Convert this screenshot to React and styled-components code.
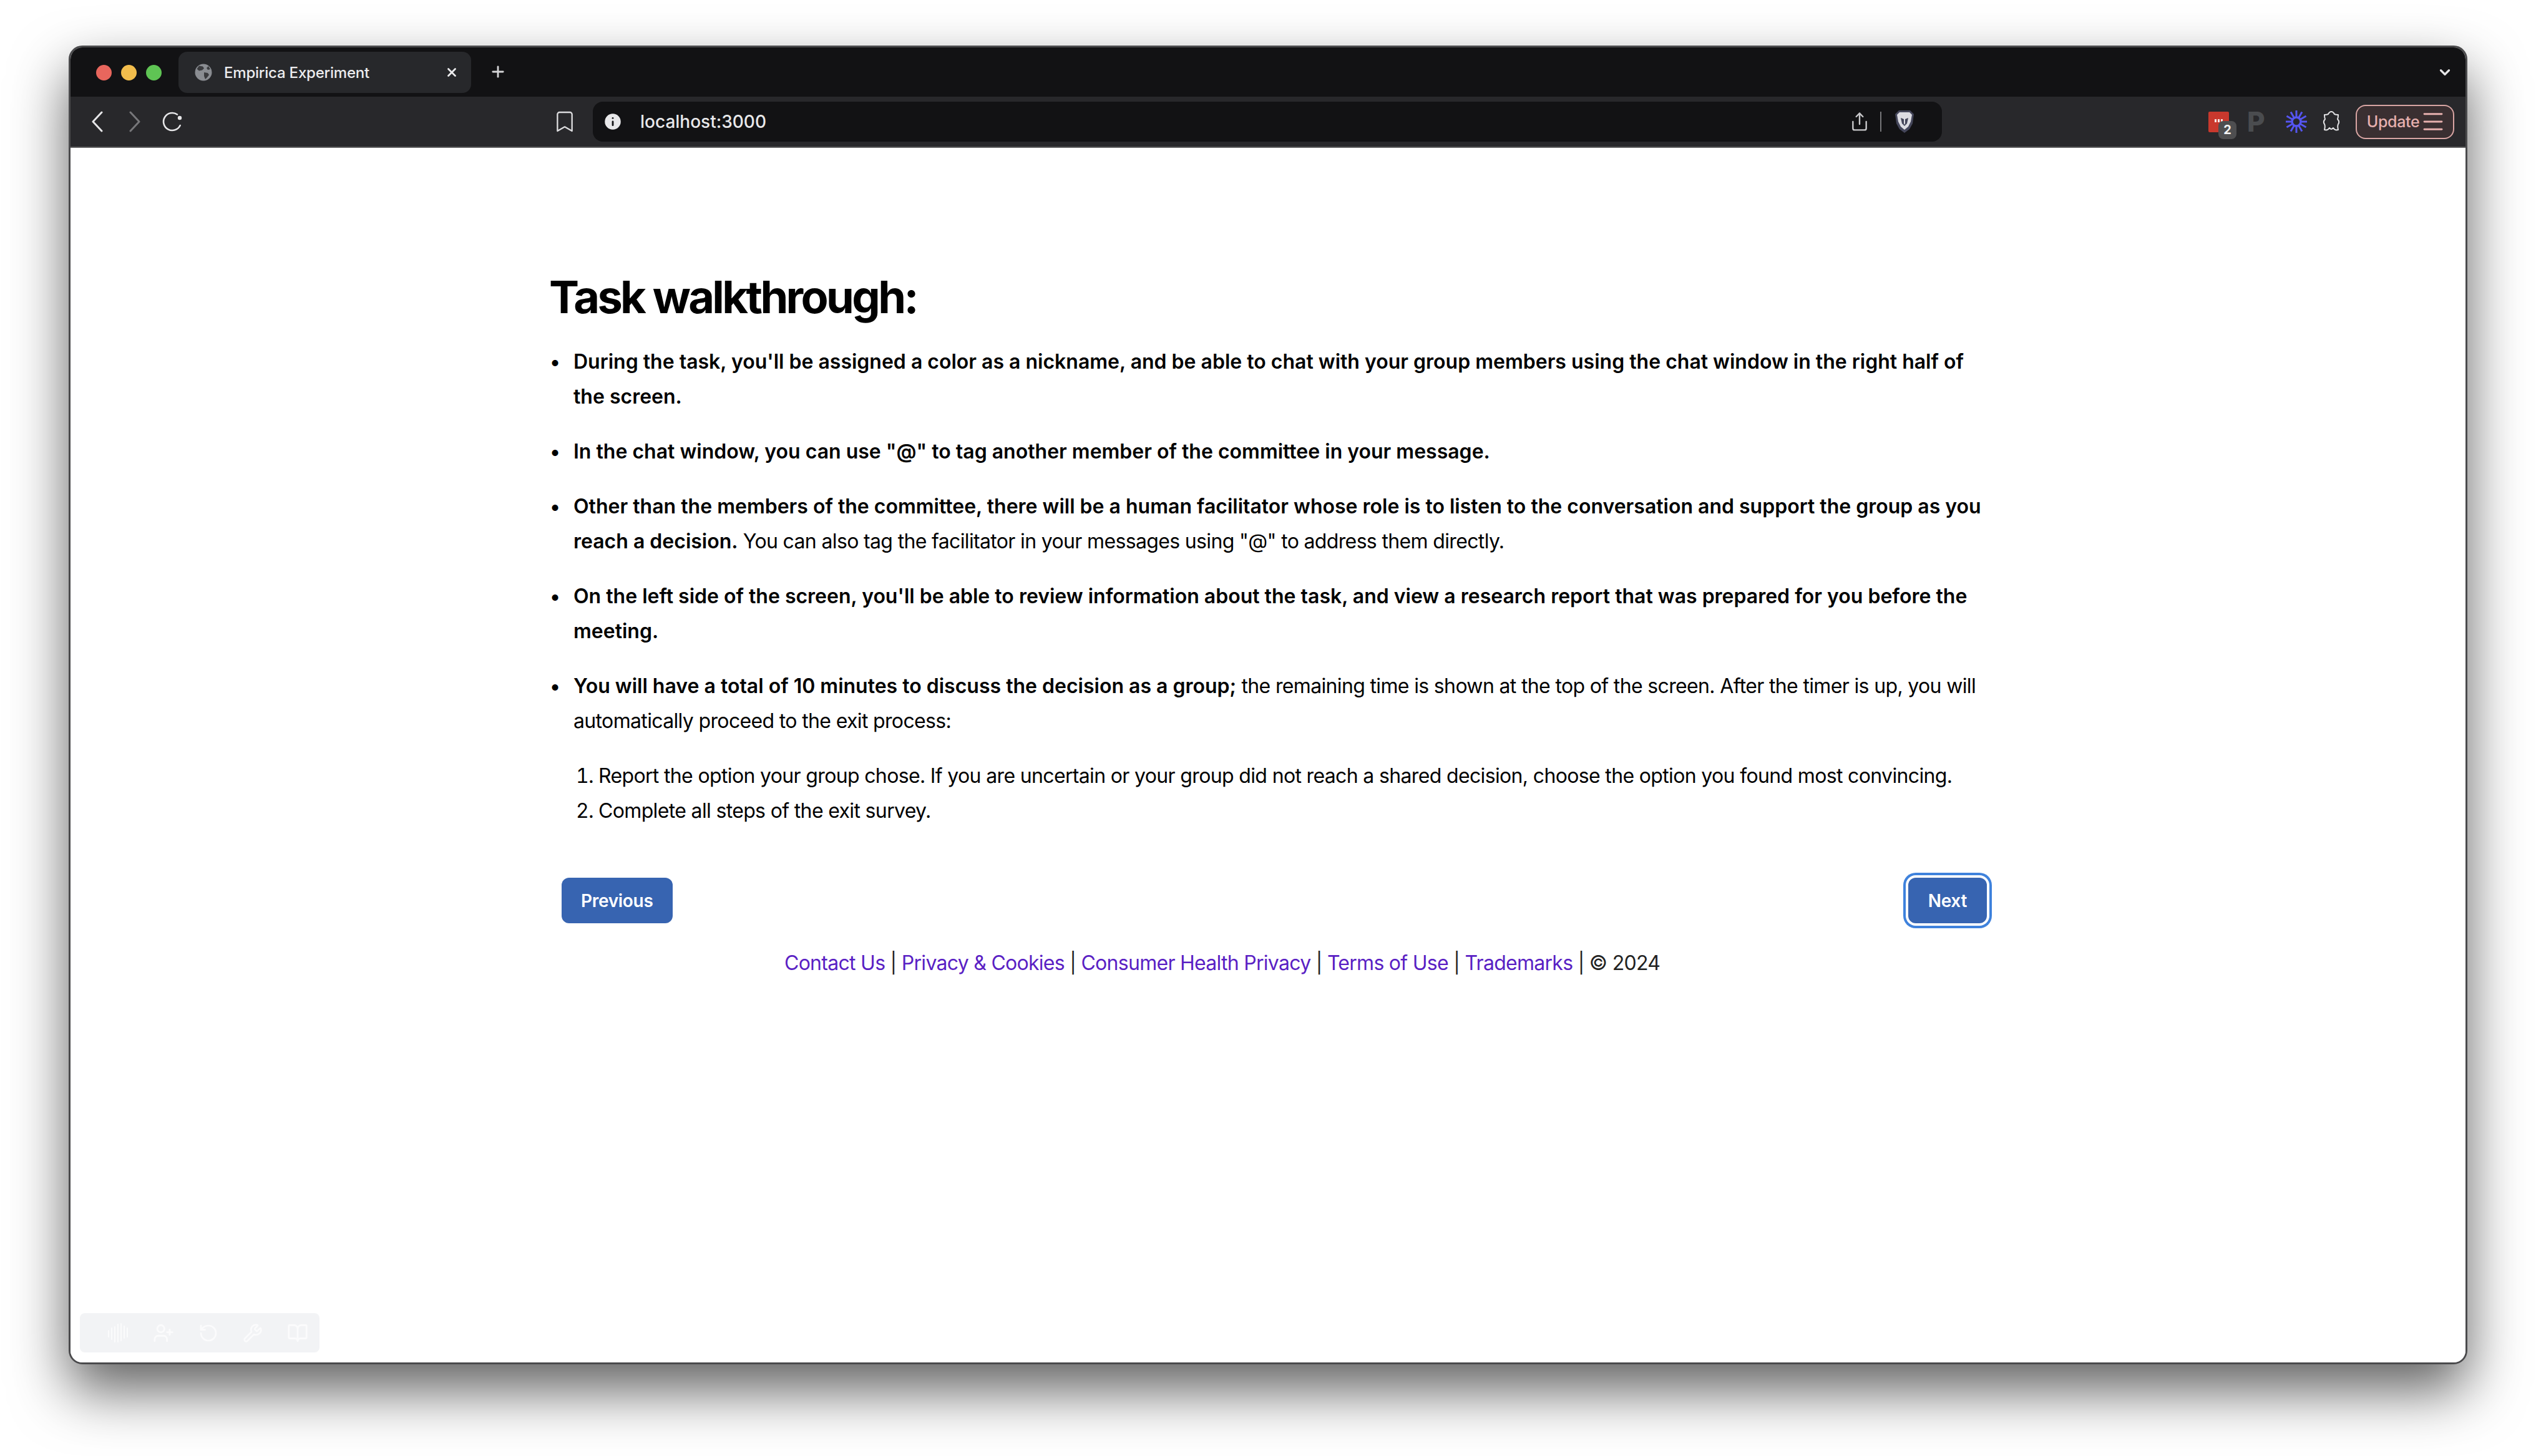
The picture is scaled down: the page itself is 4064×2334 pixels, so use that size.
import styled, { createGlobalStyle } from "styled-components";
import { BookOpen, Bookmark, ChevronDown, Info, Menu, Plus, RotateCcw, Share, UserPlus, Wrench, X } from "lucide-react";

const GlobalStyle = createGlobalStyle`
  html, body {
    margin: 0;
    background: #fff;
    font-family: Inter, "Liberation Sans", sans-serif;
  }
`;

const Page = styled.div`
  box-sizing: border-box;
  width: 4064px;
  height: 2334px;
  padding: 73px 110px 147px;
  overflow: hidden;
`;

const Window = styled.div`
  box-sizing: border-box;
  height: 100%;
  display: flex;
  flex-direction: column;
  border: 3px solid #4a4a4c;
  border-radius: 22px;
  overflow: hidden;
  background: #fff;
  box-shadow: 0 42px 90px rgba(0, 0, 0, 0.62);
`;

const TabStrip = styled.div`
  flex: 0 0 79px;
  box-sizing: border-box;
  display: flex;
  align-items: flex-start;
  padding: 7px 20px 0 41px;
  background: #121214;
  color: #e4e4e6;
`;

const Dots = styled.div`
  display: flex;
  gap: 15px;
  margin: 21px 27px 0 0;
`;

const Dot = styled.span`
  width: 25px;
  height: 25px;
  border-radius: 50%;
  background: ${(p) => p.$color};
`;

const Tab = styled.div`
  box-sizing: border-box;
  width: 469px;
  height: 66px;
  display: flex;
  align-items: center;
  padding: 0 20px 0 26px;
  border-radius: 14px;
  background: #27282b;
  font-size: 24px;
  font-weight: 500;
  letter-spacing: -0.2px;
  color: #ececee;
`;

const TabTitle = styled.span`
  flex: 1;
  margin-left: 19px;
`;

const NewTab = styled.div`
  display: flex;
  margin: 18px 0 0 29px;
  color: #d6d6d8;
`;

const TabMenu = styled.div`
  display: flex;
  margin: 20px 0 0 auto;
  color: #e4e4e6;
`;

const Toolbar = styled.div`
  flex: 0 0 82px;
  box-sizing: border-box;
  display: flex;
  align-items: center;
  padding-left: 13px;
  background: #28282b;
  border-bottom: 2px solid #5a5a5c;
  color: #e2e2e4;
`;

const NavButton = styled.span`
  display: flex;
  justify-content: center;
  width: 60px;
  color: ${(p) => (p.$dim ? "#77777a" : "#e6e6e8")};
`;

const BookmarkSlot = styled.span`
  display: flex;
  margin: 0 25px 0 579px;
  color: #dcdcde;
`;

const AddressBar = styled.div`
  box-sizing: border-box;
  width: 2162px;
  height: 64px;
  display: flex;
  align-items: center;
  padding: 0 44px 0 15px;
  border-radius: 16px;
  background: #121214;
  font-size: 28px;
  font-weight: 500;
  color: #e8e8ea;
`;

const Url = styled.span`
  flex: 1;
  margin-left: 27px;
`;

const Divider = styled.span`
  width: 2px;
  height: 32px;
  margin: 0 21px 0 17px;
  background: #77777a;
`;

const Extensions = styled.div`
  display: flex;
  align-items: center;
  margin-left: 427px;
`;

const ExtensionSlot = styled.span`
  position: relative;
  display: flex;
  margin-right: ${(p) => p.$gap}px;
`;

const RedExtension = styled.span`
  display: flex;
  align-items: center;
  justify-content: center;
  gap: 2px;
  width: 33px;
  height: 33px;
  padding-bottom: 4px;
  box-sizing: border-box;
  background: #c9382d;
  border-radius: 2px;
`;

const RedDot = styled.span`
  width: 3px;
  height: 5px;
  background: #f6e7e5;
`;

const CountBadge = styled.span`
  position: absolute;
  left: 16px;
  top: 15px;
  width: 29px;
  height: 29px;
  display: flex;
  align-items: center;
  justify-content: center;
  border-radius: 8px;
  background: #4e4e50;
  font-size: 20px;
  font-weight: 700;
  color: #f2f2f2;
`;

const PinLetter = styled.span`
  font-size: 44px;
  line-height: 36px;
  font-weight: 800;
  color: #4a4c4f;
`;

const UpdatePill = styled.div`
  box-sizing: border-box;
  width: 158px;
  height: 55px;
  display: flex;
  align-items: center;
  gap: 1px;
  padding-left: 16px;
  border: 2px solid #d8a5a3;
  border-radius: 16px;
  background: #3a2f31;
  font-size: 25px;
  font-weight: 500;
  letter-spacing: -0.3px;
  color: #e6b0ae;
`;

const Viewport = styled.main`
  flex: 1;
  display: flex;
  flex-direction: column;
  min-height: 0;
  background: #fff;
  color: #000;
`;

const Content = styled.section`
  box-sizing: border-box;
  width: 2310px;
  margin: 199px 0 0 767px;
`;

const Title = styled.h1`
  margin: 0 0 36px;
  font-size: 72px;
  line-height: 80px;
  font-weight: 700;
  letter-spacing: -3.6px;
`;

const Bullets = styled.ul`
  display: flex;
  flex-direction: column;
  gap: 32px;
  margin: 0;
  padding: 0 0 0 39px;
  font-size: 32px;
  line-height: 56px;
  letter-spacing: -0.65px;

  li::marker {
    content: "•  \u2009";
  }
`;

const Steps = styled.ol`
  margin: 32px 0 0;
  padding: 0 0 0 79px;
  font-size: 32px;
  line-height: 56px;
  letter-spacing: -0.65px;
`;

const Strong = styled.strong`
  font-weight: 600;
  letter-spacing: 0;
`;

const ButtonRow = styled.div`
  display: flex;
  justify-content: space-between;
  margin: 79px 6px 0 20px;
`;

const NavAction = styled.button`
  box-sizing: border-box;
  height: 73px;
  padding: 0 ${(p) => p.$pad}px;
  border: 0;
  border-radius: 12px;
  background: #3764b1;
  color: #fff;
  font-family: inherit;
  font-size: 28px;
  font-weight: 600;
  letter-spacing: -0.3px;
  box-shadow: ${(p) => (p.$focused ? "0 0 0 4px #fff, 0 0 0 8px #3f82dc" : "none")};
`;

const Footer = styled.footer`
  margin: 44px 0 0 377px;
  font-size: 32px;
  line-height: 40px;
  letter-spacing: -0.72px;
  color: #222;
`;

const FooterLink = styled.a`
  color: #5a1fc4;
  text-decoration: none;
`;

const Dock = styled.div`
  box-sizing: border-box;
  width: 384px;
  height: 63px;
  display: flex;
  align-items: center;
  justify-content: space-between;
  margin: auto 0 16px 15px;
  padding: 0 18px 0 44px;
  border-radius: 8px;
  background: #f2f3f5;
  color: #fbfbfc;
`;

const GlobeIcon = () => (
  <svg width="28" height="28" viewBox="0 0 28 28">
    <circle cx="14" cy="14" r="13.5" fill="#8a8d92" />
    <path
      d="M7 3.5l6 1 2 3-3 3-5 1-3.5-3zM15 14l6 1 2 3-3 4-3 3-2-5zM22 4l3 5-4 1-2-3z"
      fill="#3a3b3e"
    />
  </svg>
);

const ArrowIcon = ({ flip }) => (
  <svg width="20" height="34" viewBox="0 0 20 34" fill="none" stroke="currentColor" strokeWidth="3" strokeLinecap="round" strokeLinejoin="round">
    <path d={flip ? "M3 2l14 15L3 32" : "M17 2L3 17l14 15"} />
  </svg>
);

const ReloadIcon = () => (
  <svg width="34" height="34" viewBox="0 0 34 34" fill="none" stroke="currentColor" strokeWidth="2.6" strokeLinecap="round">
    <path d="M25 5.5A14 14 0 1 0 29.7 23" />
    <circle cx="29" cy="11" r="3.2" fill="currentColor" stroke="none" />
  </svg>
);

const LionIcon = () => (
  <svg width="32" height="38" viewBox="0 0 32 38">
    <path d="M7 1h18l6 6-2 15-5 9-8 6-8-6-5-9L1 7z" fill="#44465a" />
    <path d="M8 4h16l4 4-2 11-4 8-6 5-6-5-4-8L4 8z" fill="#dcdce2" />
    <path d="M10 13l5 2v7l1 2 1-2v-7l5-2-2 9-4 4-4-4z" fill="#44465a" />
  </svg>
);

const BurstIcon = () => (
  <svg width="34" height="36" viewBox="0 0 34 36" stroke="#5555f0" strokeWidth="3">
    {[0, 30, 60, 90, 120, 150, 180, 210, 240, 270, 300, 330].map((angle) => (
      <line key={angle} x1="17" y1="0" x2="17" y2="11" transform={`rotate(${angle} 17 18)`} />
    ))}
    <circle cx="17" cy="18" r="7" fill="none" strokeWidth="3.5" />
  </svg>
);

const ExtensionIcon = () => (
  <svg width="30" height="36" viewBox="0 0 30 36" fill="none" stroke="currentColor" strokeWidth="2" strokeLinejoin="round">
    <path d="M15 2c3 0 4 2 5 4 2 1 4 1 6 1 0 3 0 5-1 7 2 2 3 5 1 8-1 2-1 5 0 9-3 1-6 0-8-3-1 1-2 2-3 2s-2-1-3-2c-2 3-5 4-8 3 1-4 1-7 0-9-2-3-1-6 1-8-1-2-1-4-1-7 2 0 4 0 6-1 1-2 2-4 5-4z" />
  </svg>
);

const WaveIcon = () => (
  <svg width="34" height="32" viewBox="0 0 34 32" stroke="currentColor" strokeWidth="2" strokeLinecap="round">
    {[
      [2, 12, 22],
      [7, 8, 26],
      [12, 6, 30],
      [17, 2, 30],
      [22, 1, 28],
      [27, 5, 24],
      [32, 8, 22],
    ].map(([x, y1, y2]) => (
      <line key={x} x1={x} y1={y1} x2={x} y2={y2} />
    ))}
  </svg>
);

const footerLinks = [
  "Contact Us",
  "Privacy & Cookies",
  "Consumer Health Privacy",
  "Terms of Use",
  "Trademarks",
];

const App = () => {
  return (
    <Page>
      <GlobalStyle />
      <Window>
        <TabStrip>
          <Dots>
            <Dot $color="#e8665d" />
            <Dot $color="#f2bd4c" />
            <Dot $color="#5fc454" />
          </Dots>
          <Tab>
            <GlobeIcon />
            <TabTitle>Empirica Experiment</TabTitle>
            <X size={22} strokeWidth={3} />
          </Tab>
          <NewTab>
            <Plus size={28} strokeWidth={2.4} />
          </NewTab>
          <TabMenu>
            <ChevronDown size={26} strokeWidth={3} />
          </TabMenu>
        </TabStrip>
        <Toolbar>
          <NavButton>
            <ArrowIcon />
          </NavButton>
          <NavButton $dim>
            <ArrowIcon flip />
          </NavButton>
          <NavButton>
            <ReloadIcon />
          </NavButton>
          <BookmarkSlot>
            <Bookmark size={40} strokeWidth={1.4} />
          </BookmarkSlot>
          <AddressBar>
            <Info size={34} fill="#e8e8ea" stroke="#121214" strokeWidth={2} />
            <Url>localhost:3000</Url>
            <Share size={32} strokeWidth={1.8} color="#c8c8ca" />
            <Divider />
            <LionIcon />
          </AddressBar>
          <Extensions>
            <ExtensionSlot $gap={29}>
              <RedExtension>
                <RedDot />
                <RedDot />
                <RedDot />
              </RedExtension>
              <CountBadge>2</CountBadge>
            </ExtensionSlot>
            <ExtensionSlot $gap={33}>
              <PinLetter>P</PinLetter>
            </ExtensionSlot>
            <ExtensionSlot $gap={24}>
              <BurstIcon />
            </ExtensionSlot>
            <ExtensionSlot $gap={24}>
              <ExtensionIcon />
            </ExtensionSlot>
            <UpdatePill>
              Update
              <Menu size={42} strokeWidth={1.6} />
            </UpdatePill>
          </Extensions>
        </Toolbar>
        <Viewport>
          <Content>
            <Title>Task walkthrough:</Title>
            <Bullets>
              <li>
                <Strong>
                  During the task, you'll be assigned a color as a nickname, and be able to chat with
                  your group members using the chat window in the right half of the screen.
                </Strong>
              </li>
              <li>
                <Strong>
                  In the chat window, you can use "@" to tag another member of the committee in your
                  message.
                </Strong>
              </li>
              <li>
                <Strong>
                  Other than the members of the committee, there will be a human facilitator whose
                  role is to listen to the conversation and support the group as you reach a
                  decision.
                </Strong>{" "}
                You can also tag the facilitator in your messages using "@" to address them directly.
              </li>
              <li>
                <Strong>
                  On the left side of the screen, you'll be able to review information about the task,
                  and view a research report that was prepared for you before the meeting.
                </Strong>
              </li>
              <li>
                <Strong>You will have a total of 10 minutes to discuss the decision as a group;</Strong>{" "}
                the remaining time is shown at the top of the screen. After the timer is up, you will
                automatically proceed to the exit process:
              </li>
            </Bullets>
            <Steps>
              <li>
                Report the option your group chose. If you are uncertain or your group did not reach a
                shared decision, choose the option you found most convincing.
              </li>
              <li>Complete all steps of the exit survey.</li>
            </Steps>
            <ButtonRow>
              <NavAction $pad={31}>Previous</NavAction>
              <NavAction $pad={32} $focused>
                Next
              </NavAction>
            </ButtonRow>
            <Footer>
              {footerLinks.map((label) => (
                <span key={label}>
                  <FooterLink href="#">{label}</FooterLink> |{" "}
                </span>
              ))}
              © 2024
            </Footer>
          </Content>
          <Dock>
            <WaveIcon />
            <UserPlus size={34} strokeWidth={2} />
            <RotateCcw size={32} strokeWidth={2} />
            <Wrench size={32} strokeWidth={2} />
            <BookOpen size={34} strokeWidth={2} />
          </Dock>
        </Viewport>
      </Window>
    </Page>
  );
};

export default App;
